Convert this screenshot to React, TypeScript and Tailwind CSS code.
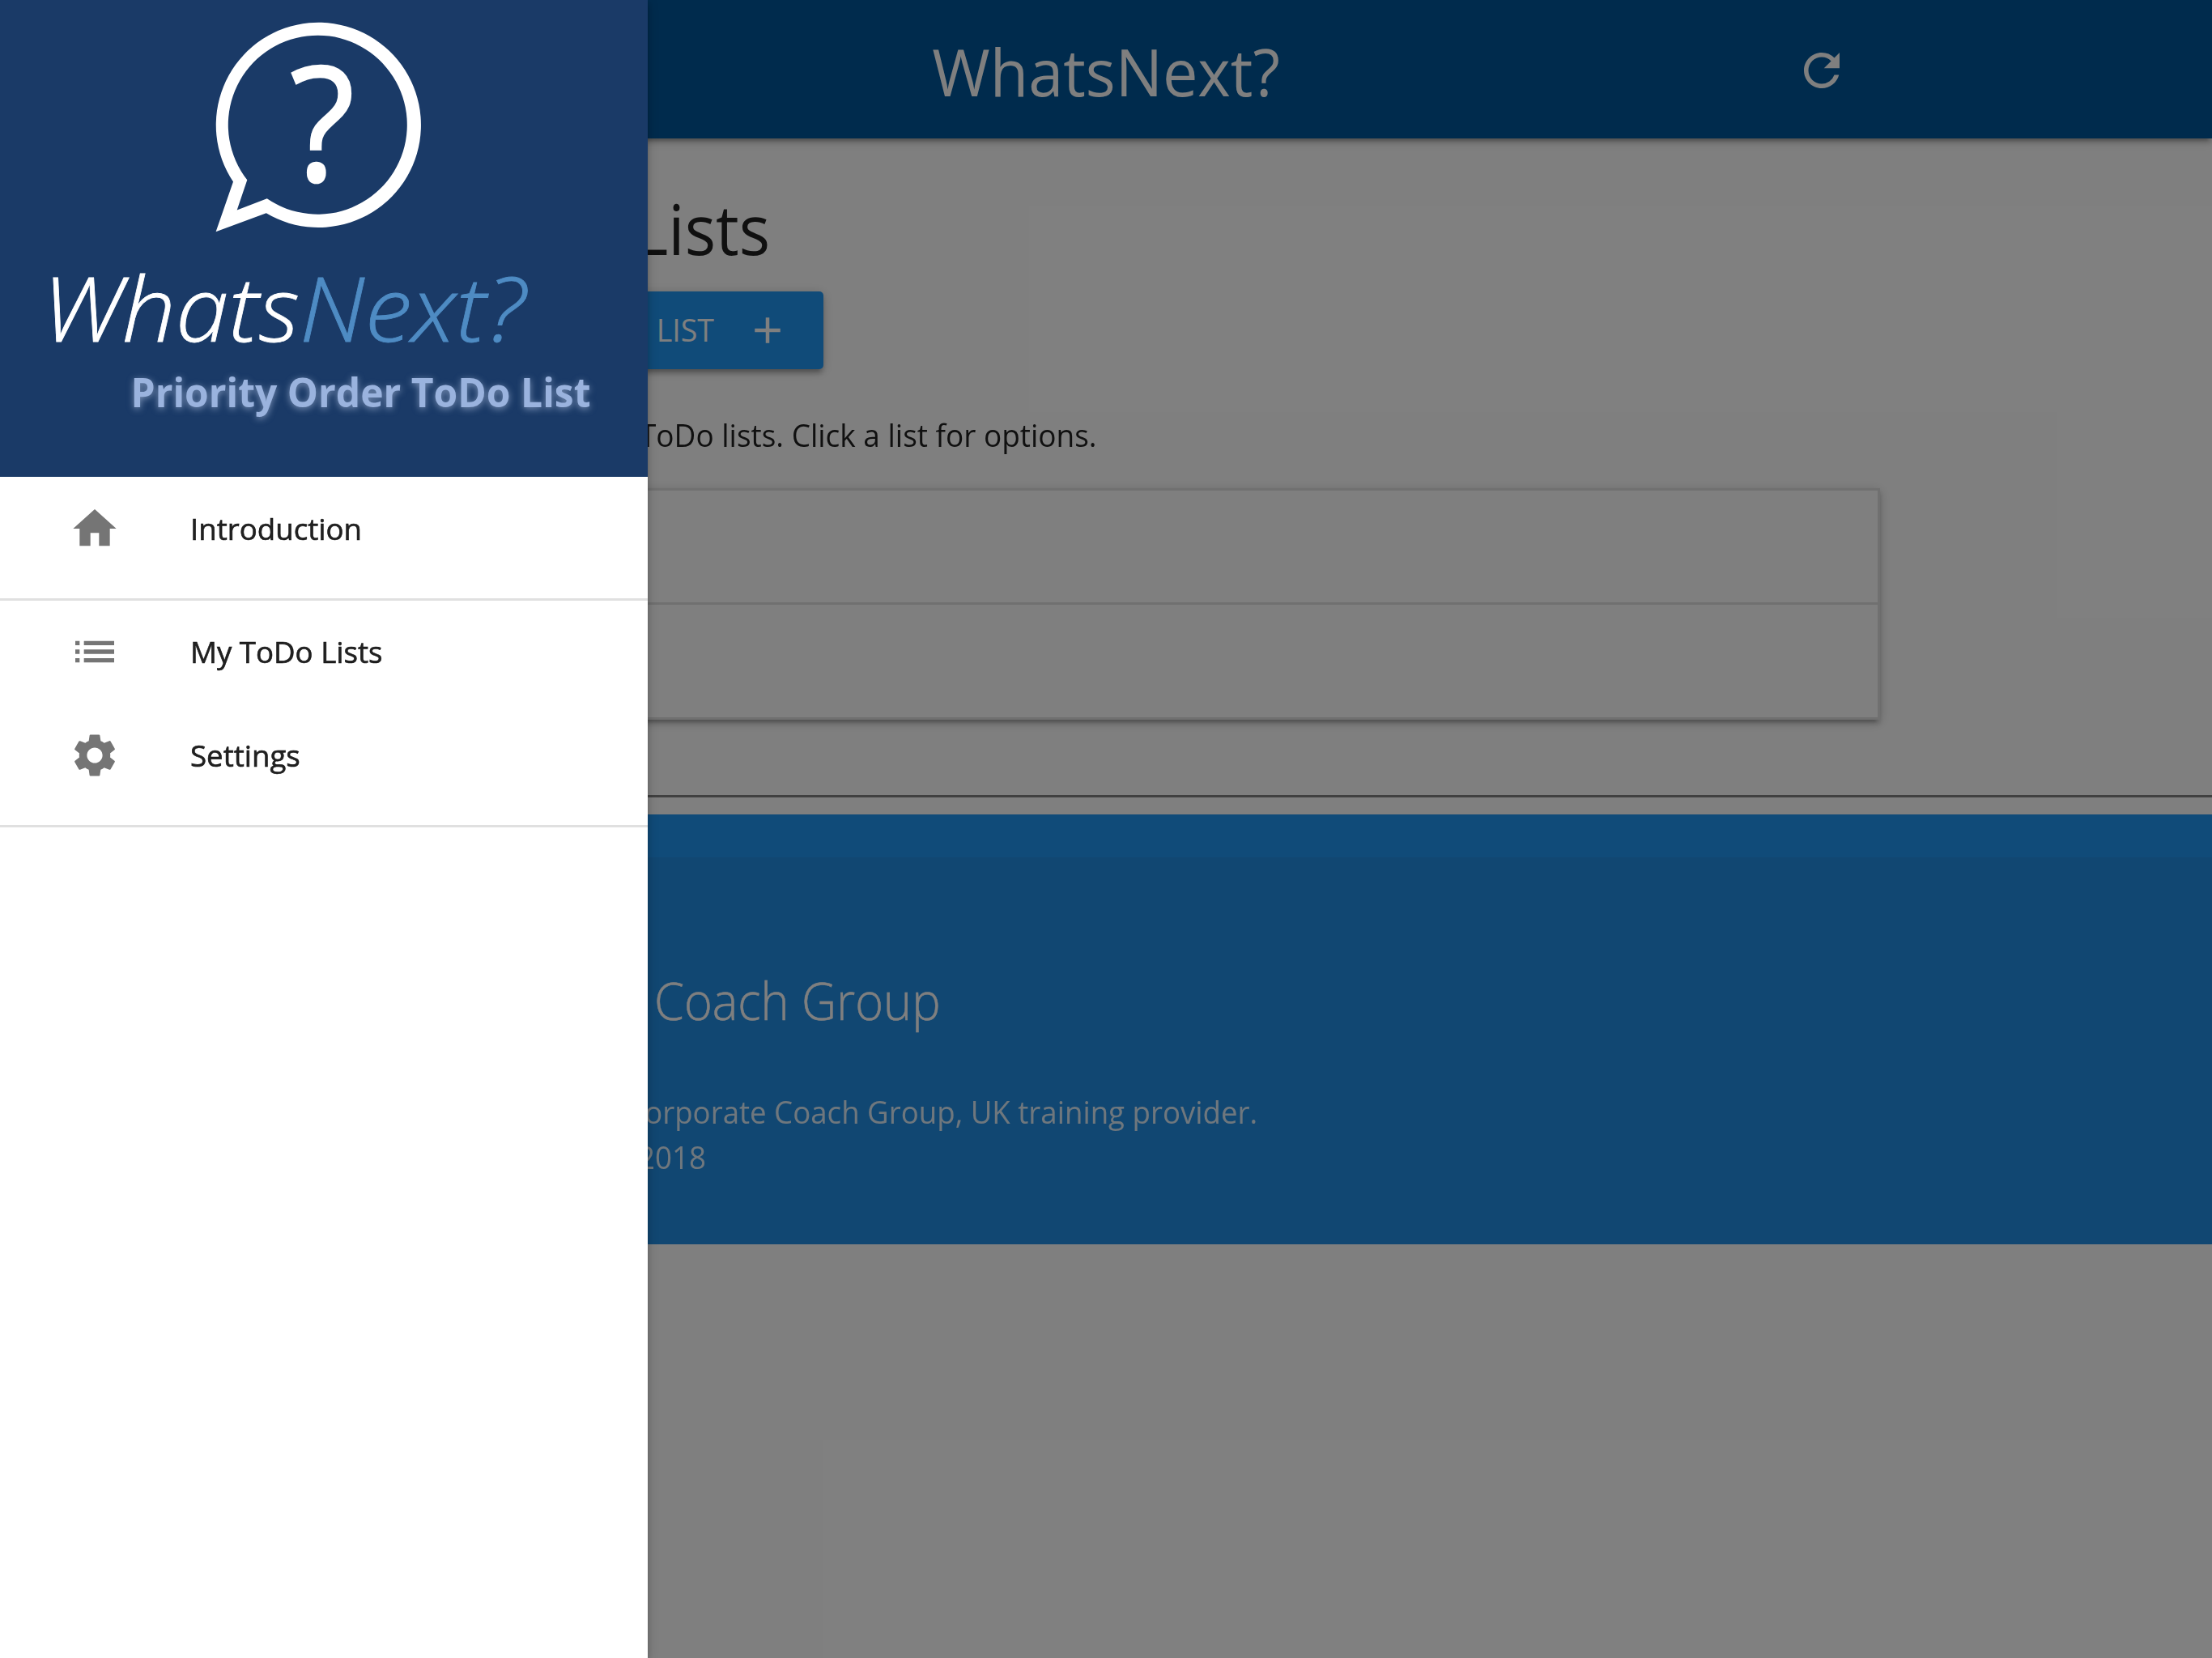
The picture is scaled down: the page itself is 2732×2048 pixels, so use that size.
import React from "react";
import { MdAdd, MdHome, MdList, MdRefresh, MdSettings } from "react-icons/md";

const DEPTH =
  "shadow-[0_5.3px_5.3px_0_rgba(0,0,0,0.14),0_8px_2.7px_-5.3px_rgba(0,0,0,0.12),0_2.7px_13.3px_0_rgba(0,0,0,0.2)]";

function Header() {
  return (
    <header className={`relative h-[171px] bg-[#01579b] text-white ${DEPTH}`}>
      <div className="mx-auto grid h-full w-[1912px] grid-cols-[1fr_auto_1fr] items-center">
        <span />
        <h1 className="scale-x-[0.967] pt-[2px] text-[80px] leading-[171px]">WhatsNext?</h1>
        <MdRefresh className="mr-[39px] size-[66px] justify-self-end" />
      </div>
    </header>
  );
}

function Content() {
  return (
    <main className="mx-auto flex w-[1912px] flex-col items-start pt-[51px] text-black/87">
      <h2 className="flex w-[541px] justify-end text-[86px] leading-[120px]">
        <span className="origin-right scale-x-[0.937]">Lists</span>
      </h2>
      <button
        className={`mt-[18px] flex h-24 w-[606.5px] items-center justify-end gap-[39px] rounded-[5px] bg-[#2196f3] pr-[41.5px] text-[37.5px] text-white ${DEPTH}`}
      >
        <span>LIST</span>
        <MdAdd className="-mt-px size-[54px]" />
      </button>
      <p className="mt-[53px] flex w-[945px] justify-end text-[39px] leading-[56px]">
        <span className="origin-right scale-x-[0.948] whitespace-nowrap">ToDo lists. Click a list for options.</span>
      </p>
      <ul className={`mt-[38px] h-[286px] w-full divide-y-[3px] divide-[#e0e0e0] border-[3px] border-[#e0e0e0] bg-white ${DEPTH}`}>
        <li className="h-[141px]" />
        <li className="h-[139px]" />
      </ul>
    </main>
  );
}

function Footer() {
  return (
    <footer className="mt-[21px] bg-[#2196f3] pt-[53px] text-white">
      <div className="h-[478px] bg-[rgba(51,51,51,0.08)] pt-[132px]">
        <div className="mx-auto w-[1912px]">
          <h3 className="flex w-[752px] justify-end text-[64px] leading-[90px] font-light">
            <span className="origin-right scale-x-[0.929] whitespace-nowrap [-webkit-text-stroke:0.5px_#fff]">
              Coach Group
            </span>
          </h3>
          <div className="mt-[64px] text-[38px] leading-[56px] text-white/85">
            <p className="flex w-[1143px] justify-end">
              <span className="origin-right scale-x-[0.964] whitespace-nowrap">
                Corporate Coach Group, UK training provider.
              </span>
            </p>
            <p className="flex w-[462px] justify-end">
              <span className="origin-right scale-x-[0.966]">2018</span>
            </p>
          </div>
        </div>
      </div>
    </footer>
  );
}

function Logo() {
  return (
    <svg viewBox="0 0 800 589" className="block h-[589px] w-full bg-[#1a3a67]" fontFamily='"Open Sans", sans-serif'>
      <path
        fill="#fff"
        fillRule="evenodd"
        d="M288 224.6A126.6 126.6 0 1 1 328.8 263.3L266.6 286.3ZM305.3 222.3A110.5 110.5 0 1 1 329.8 245.3L292.7 259.5Z"
      />
      <text
        x="358"
        y="223"
        fontSize="196"
        fill="#fff"
        stroke="#fff"
        strokeWidth="2.5"
        textLength="80"
        lengthAdjust="spacingAndGlyphs"
      >
        ?
      </text>
      <g fontSize="111" fontStyle="italic" fontWeight="300" strokeWidth="0.8">
        <text x="52" y="422" fill="#fff" stroke="#fff" textLength="318" lengthAdjust="spacingAndGlyphs">
          Whats
        </text>
        <text x="370" y="422" fill="#4e8bc3" stroke="#4e8bc3" textLength="279" lengthAdjust="spacingAndGlyphs">
          Next?
        </text>
      </g>
      <text
        x="161.5"
        y="503"
        fontSize="51"
        fontWeight="700"
        fill="#9ab3de"
        textLength="568"
        lengthAdjust="spacingAndGlyphs"
        className="[filter:drop-shadow(0_2px_4px_rgba(190,205,235,0.6))]"
      >
        Priority Order ToDo List
      </text>
    </svg>
  );
}

function NavItem({ icon: Icon, label }: { icon: React.ComponentType<{ className?: string }>; label: string }) {
  return (
    <a className="flex h-32 items-center gap-[86px] pl-[85px]">
      <Icon className="size-16 text-[#757575]" />
      <span className="origin-left scale-x-[0.99] text-[37px] text-black/87 [-webkit-text-stroke:0.6px_rgba(0,0,0,0.87)]">
        {label}
      </span>
    </a>
  );
}

function Divider() {
  return <div className="mt-[22px] -mb-px h-[3px] bg-[#e0e0e0]" />;
}

function Drawer() {
  return (
    <aside className={`absolute inset-y-0 left-0 w-[800px] bg-white ${DEPTH}`}>
      <Logo />
      <nav>
        <NavItem icon={MdHome} label="Introduction" />
        <Divider />
        <NavItem icon={MdList} label="My ToDo Lists" />
        <NavItem icon={MdSettings} label="Settings" />
        <Divider />
      </nav>
    </aside>
  );
}

export default function App() {
  return (
    <div className="relative h-[2048px] w-[2732px] overflow-hidden bg-white font-['Open_Sans',sans-serif]">
      <Header />
      <Content />
      <div className="mt-[93px] h-[3px] bg-[#808080]" />
      <Footer />
      <div className="absolute inset-0 bg-black/50" />
      <Drawer />
    </div>
  );
}
